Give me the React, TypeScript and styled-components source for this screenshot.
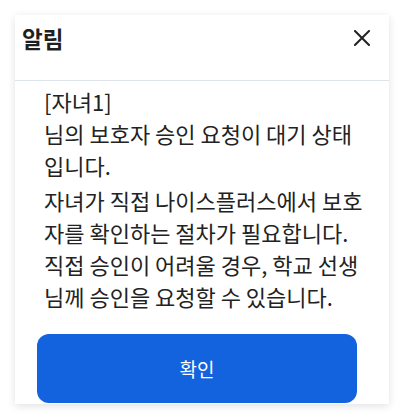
import styled, { createGlobalStyle } from 'styled-components';

const GlobalStyle = createGlobalStyle`
  html, body {
    margin: 0;
    padding: 0;
    background: #ffffff;
  }
  body {
    font-family: 'Noto Sans CJK KR', 'Noto Sans', sans-serif;
    color: #222222;
  }
`;

const Page = styled.div`
  width: 405px;
  height: 417px;
  padding: 15px 0 0 15px;
  box-sizing: border-box;
  overflow: hidden;
`;

const Card = styled.div`
  width: 374px;
  background: #ffffff;
  box-shadow: 0 2px 8px rgba(0, 0, 0, 0.12);
  display: flex;
  flex-direction: column;
  padding-bottom: 1px;
`;

const Header = styled.div`
  height: 58px;
  display: flex;
  align-items: flex-start;
  justify-content: space-between;
  padding: 7px 19px 0 7px;
  border-bottom: 1px solid #dde5eb;
  box-sizing: content-box;
`;

const Title = styled.h2`
  margin: 0;
  font-size: 22.5px;
  font-weight: 700;
  line-height: 32px;
  color: #1f1f1f;
`;

const CloseButton = styled.button`
  border: 0;
  background: none;
  padding: 0;
  margin-top: 8px;
  width: 16px;
  height: 16px;
  display: flex;
  cursor: pointer;
`;

const Body = styled.div`
  width: 328px;
  padding: 4px 0 0 29px;
  display: flex;
  flex-direction: column;
  gap: 3px;
`;

const Paragraph = styled.p`
  margin: 0;
  font-size: 22px;
  line-height: 32px;
  color: #222222;
`;

const ConfirmButton = styled.button`
  margin: 22px 0 0 22px;
  width: 320px;
  height: 69px;
  border: 0;
  border-radius: 12px;
  background: #1363df;
  color: #ffffff;
  font-family: inherit;
  font-size: 19px;
  cursor: pointer;
`;

export default function App() {
  return (
    <>
      <GlobalStyle />
      <Page>
        <Card>
          <Header>
            <Title>알림</Title>
            <CloseButton aria-label="닫기">
              <svg width="16" height="16" viewBox="0 0 16 16">
                <path d="M1 1 L15 15 M15 1 L1 15" stroke="#222" strokeWidth="2" strokeLinecap="square" />
              </svg>
            </CloseButton>
          </Header>
          <Body>
            <Paragraph>
              [자녀1]
              <br />
              님의 보호자 승인 요청이 대기 상태 입니다.
            </Paragraph>
            <Paragraph>
              자녀가 직접 나이스플러스에서 보호자를 확인하는 절차가 필요합니다. 직접 승인이 어려울 경우, 학교 선생님께 승인을 요청할 수 있습니다.
            </Paragraph>
          </Body>
          <ConfirmButton>확인</ConfirmButton>
        </Card>
      </Page>
    </>
  );
}
